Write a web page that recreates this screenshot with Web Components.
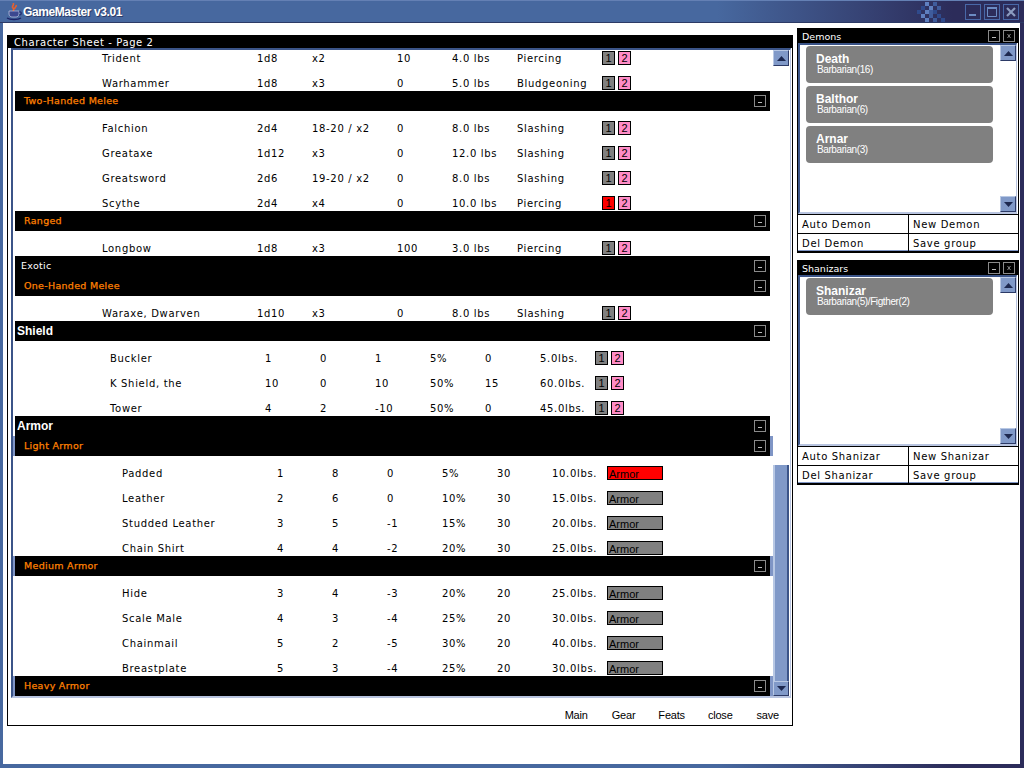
<!DOCTYPE html>
<html lang="en"><head><meta charset="utf-8"><title>GameMaster v3.01</title>
<style>html,body{margin:0;padding:0;background:#fff}</style></head>
<body>
<gm-window label="GameMaster v3.01">
  <gm-sheet label="Character Sheet - Page 2">
    <gm-row kind="w" cells="Trident|1d8|x2|10|4.0 lbs|Piercing"></gm-row>
    <gm-row kind="w" cells="Warhammer|1d8|x3|0|5.0 lbs|Bludgeoning"></gm-row>
    <gm-band level="sub">Two-Handed Melee</gm-band>
    <gm-row kind="w" cells="Falchion|2d4|18-20 / x2|0|8.0 lbs|Slashing"></gm-row>
    <gm-row kind="w" cells="Greataxe|1d12|x3|0|12.0 lbs|Slashing"></gm-row>
    <gm-row kind="w" cells="Greatsword|2d6|19-20 / x2|0|8.0 lbs|Slashing"></gm-row>
    <gm-row kind="w" active cells="Scythe|2d4|x4|0|10.0 lbs|Piercing"></gm-row>
    <gm-band level="sub">Ranged</gm-band>
    <gm-row kind="w" cells="Longbow|1d8|x3|100|3.0 lbs|Piercing"></gm-row>
    <gm-band level="mid">Exotic</gm-band>
    <gm-band level="sub">One-Handed Melee</gm-band>
    <gm-row kind="w" cells="Waraxe, Dwarven|1d10|x3|0|8.0 lbs|Slashing"></gm-row>
    <gm-band level="top">Shield</gm-band>
    <gm-row kind="s" cells="Buckler|1|0|1|5%|0|5.0lbs."></gm-row>
    <gm-row kind="s" cells="K Shield, the|10|0|10|50%|15|60.0lbs."></gm-row>
    <gm-row kind="s" cells="Tower|4|2|-10|50%|0|45.0lbs."></gm-row>
    <gm-band level="top">Armor</gm-band>
    <gm-band level="sub" strip>Light Armor</gm-band>
    <gm-row kind="a" active cells="Padded|1|8|0|5%|30|10.0lbs."></gm-row>
    <gm-row kind="a" cells="Leather|2|6|0|10%|30|15.0lbs."></gm-row>
    <gm-row kind="a" cells="Studded Leather|3|5|-1|15%|30|20.0lbs."></gm-row>
    <gm-row kind="a" cells="Chain Shirt|4|4|-2|20%|30|25.0lbs."></gm-row>
    <gm-band level="sub" strip>Medium Armor</gm-band>
    <gm-row kind="a" cells="Hide|3|4|-3|20%|20|25.0lbs."></gm-row>
    <gm-row kind="a" cells="Scale Male|4|3|-4|25%|20|30.0lbs."></gm-row>
    <gm-row kind="a" cells="Chainmail|5|2|-5|30%|20|40.0lbs."></gm-row>
    <gm-row kind="a" cells="Breastplate|5|3|-4|25%|20|30.0lbs."></gm-row>
    <gm-band level="sub" strip>Heavy Armor</gm-band>
  </gm-sheet>
  <gm-side>
    <gm-pane label="Demons" b1="Auto Demon" b2="New Demon" b3="Del Demon" b4="Save group">
      <gm-card name="Death" info="Barbarian(16)"></gm-card>
      <gm-card name="Balthor" info="Barbarian(6)"></gm-card>
      <gm-card name="Arnar" info="Barbarian(3)"></gm-card>
    </gm-pane>
    <gm-pane label="Shanizars" b1="Auto Shanizar" b2="New Shanizar" b3="Del Shanizar" b4="Save group">
      <gm-card name="Shanizar" info="Barbarian(5)/Figther(2)"></gm-card>
    </gm-pane>
  </gm-side>
</gm-window>
<script>
const FONT = '"DejaVu Sans", sans-serif';
const ARROW_UP = '<svg width="9" height="5" viewBox="0 0 9 5"><path d="M4.5 0 9 5H0z" fill="#1c2850"/></svg>';
const ARROW_DN = '<svg width="9" height="5" viewBox="0 0 9 5"><path d="M0 0h9L4.5 5z" fill="#1c2850"/></svg>';
const esc = s => String(s == null ? '' : s).replace(/&/g,'&amp;').replace(/</g,'&lt;').replace(/"/g,'&quot;');
class Base extends HTMLElement {
  render(html){ if(!this.shadowRoot) this.attachShadow({mode:'open'}); this.shadowRoot.innerHTML = html; }
}
function dots(){
  const cells = ['2,0','4,0','1,1','3,1','5,1','0,2','2,2','3,2','4,2','1,3','3,3','5,3','2,4','4,4','6,4'];
  return '<svg width="28" height="22" viewBox="0 0 28 22" style="display:block">' +
    cells.map((c,i)=>{const [x,y]=c.split(',').map(Number);return `<rect x="${x*4}" y="${y*4+1}" width="4" height="4" fill="${i%3==0?'#5f80c0':i%3==1?'#3f5c9c':'#2f4a8c'}"/>`}).join('') + '</svg>';
}
customElements.define('gm-window', class extends Base {
  connectedCallback(){
    this.render(`<style>
      :host{display:flex;flex-direction:column;width:1024px;height:768px;box-sizing:border-box;padding:0 4px 4px 3px;
        background:linear-gradient(90deg,#47689f 0,#47689f 70%,#2c2c5a 93%);
        font:10px ${FONT};letter-spacing:.68px;color:#000;overflow:hidden}
      .bar{flex:none;height:22px;margin:0 -4px 0 -3px;padding:0 5px 0 6px;display:flex;align-items:center;
        border-top:1px solid #6480b4;box-sizing:border-box}
      .bar>svg.logo{flex:none}
      .t{font:bold 12px "Liberation Sans",sans-serif;letter-spacing:-.4px;color:#fff;text-shadow:1px 1px 0 #2c3a66;flex:1}
      .dots{margin-right:17px}
      .wb{width:16px;height:16px;margin-left:3px;box-sizing:border-box;border:1px solid #4868a8;display:flex;align-items:center;justify-content:center}
      .line{flex:none;height:1px;background:#2c3a66;margin:0 -4px 0 -3px}
      .body{flex:1;min-height:0;background:#fff;display:flex;align-items:flex-start}
    </style>
    <div class="bar">
      <svg class="logo" width="17" height="18" viewBox="0 0 17 18">
        <path d="M7 0c2 2-2 3 0 5 1 1 1 2 0 3M10 2c1 2-2 2-1 4" fill="none" stroke="#e8602c" stroke-width="1.6"/>
        <path d="M3 8h10v3c0 2-2 3-3 3H6c-1 0-3-1-3-3z" fill="#3c4890" stroke="#d8dcf0" stroke-width=".6"/>
        <path d="M13 9c3-1 3 3 0 3" fill="none" stroke="#202c70" stroke-width="1.2"/>
        <path d="M1 15c3 2 11 2 14 0" fill="none" stroke="#1c2468" stroke-width="1.4"/>
      </svg>
      <span class="t">${esc(this.getAttribute('label'))}</span>
      <span class="dots">${dots()}</span>
      <span class="wb"><svg width="10" height="10" viewBox="0 0 10 10"><rect x="1" y="7" width="7" height="2" fill="#6c8cc4"/></svg></span>
      <span class="wb"><svg width="12" height="12" viewBox="0 0 12 12"><path d="M1.500 2v8.500h9V2z" fill="none" stroke="#6c8cc4"/><rect x="1" y="1" width="10" height="2" fill="#6c8cc4"/></svg></span>
      <span class="wb"><svg width="10" height="10" viewBox="0 0 10 10"><path d="M1 1l8 8M9 1l-8 8" stroke="#8c9cc0" stroke-width="2.200"/></svg></span>
    </div>
    <div class="line"></div>
    <div class="body"><slot></slot></div>`);
  }
});
customElements.define('gm-mini', class extends Base {
  connectedCallback(){
    this.render(`<style>
      :host{display:flex;flex:none;align-items:center;justify-content:center;width:12px;height:12px;box-sizing:border-box;border:1px solid #8a8a8a}
      svg{display:block}
    </style>${this.getAttribute('kind')==='x'
      ? '<svg width="6" height="6" viewBox="0 0 6 6"><path d="M1.500 1l3 4M4.500 1l-3 4" stroke="#999" stroke-width=".9"/></svg>'
      : '<svg width="6" height="6" viewBox="0 0 6 6"><rect x="1" y="4" width="4" height="1" fill="#bbb"/></svg>'}`);
  }
});
customElements.define('gm-sheet', class extends Base {
  connectedCallback(){
    this.render(`<style>
      :host{display:flex;flex-direction:column;flex:none;width:786px;height:691px;box-sizing:border-box;margin:12px 0 0 4px;
        border:1px solid #000;border-top:0}
      .title{flex:none;height:13px;line-height:16px;background:#000;color:#fff;padding-left:7px;margin:0 -1px;overflow:hidden;letter-spacing:.6px}
      .panel{flex:none;display:flex;height:650px;box-sizing:border-box;margin:0 1px 0 3px;
        border-style:solid;border-width:2px 1px 2px 2px;border-color:#3b5488 #b8c4e0 #b8c4e0 #3b5488}
      .content{flex:none;width:760px;overflow:hidden}
      .inner{margin-top:-9px}
      .bar{flex:none;width:16px;display:flex;flex-direction:column}
      .btn{flex:none;height:16px;box-sizing:border-box;display:flex;align-items:center;justify-content:center;
        background:#8099c8;border:1px solid;border-color:#b8c8e4 #2c3a66 #2c3a66 #b8c8e4}
      .dn{height:15px}
      .thumb{flex:none;height:216px;margin-top:auto;box-sizing:border-box;background:#8099c8;border-left:2px solid #b8c8e4;border-right:2px solid #3b5488}
      .foot{flex:1;display:flex;justify-content:flex-end;align-items:center;padding:6px 13px 0 0;
        font:11px "Liberation Sans",sans-serif;letter-spacing:-.2px;color:#000}
      .foot span{display:block}
    </style>
    <div class="title">${esc(this.getAttribute('label'))}</div>
    <div class="panel">
      <div class="content"><div class="inner"><slot></slot></div></div>
      <div class="bar">
        <div class="btn">${ARROW_UP}</div>
        <div class="thumb"></div>
        <div class="btn dn">${ARROW_DN}</div>
      </div>
    </div>
    <div class="foot">
      <span style="margin-right:24px">Main</span><span style="margin-right:23px">Gear</span><span style="margin-right:23px">Feats</span><span style="margin-right:24px">close</span><span>save</span>
    </div>`);
  }
});
customElements.define('gm-band', class extends Base {
  connectedCallback(){
    this.render(`<style>
      :host{display:flex;align-items:center;height:20px;background:#000;margin:0 3px 0 2px;box-sizing:content-box}
      :host([strip]){margin:0;border-left:2px solid #7f95c5;border-right:3px solid #7f95c5}
      .t{flex:1;min-width:0}
      :host([level=sub]) .t{padding:0 0 2px 9px;color:#ff8000;-webkit-text-stroke:.25px #ff8000;font-size:9.500px;letter-spacing:.3px}
      :host([level=mid]) .t{padding:0 0 2px 6px;color:#fff;font-size:9.500px;letter-spacing:.3px}
      :host([level=top]) .t{padding-left:2px;color:#fff;font:bold 12px "Liberation Sans",sans-serif;letter-spacing:0}
      gm-mini{margin-right:4px}
    </style><span class="t"><slot></slot></span><gm-mini></gm-mini>`);
  }
});
customElements.define('gm-pick', class extends Base {
  connectedCallback(){
    this.render(`<style>
      :host{display:block;box-sizing:border-box;border:1px solid #000;width:13px;height:14px;text-align:center;
        font:11px/13px "Liberation Sans",sans-serif;letter-spacing:0;color:#000;background:#808080}
      :host([tone=pink]){background:#ff8cc6}
      :host([tone=red]){background:#f00}
      :host([wide]){width:56px;text-align:left;padding-left:1px;line-height:14px}
    </style><slot></slot>`);
  }
});
const COLS = {w:'155px 55px 85px 55px 65px 85px auto', s:'155px 55px 55px 55px 55px 55px 55px auto', a:'155px 55px 55px 55px 55px 55px 55px auto'};
const PAD = {w:89, s:97, a:109};
customElements.define('gm-row', class extends Base {
  connectedCallback(){
    const k = this.getAttribute('kind');
    const cells = this.getAttribute('cells').split('|');
    const act = this.hasAttribute('active');
    const ctrl = k==='a'
      ? `<gm-pick wide ${act?'tone="red"':''}>Armor</gm-pick>`
      : `<div class="pk"><gm-pick ${act?'tone="red"':''}>1</gm-pick><gm-pick tone="pink">2</gm-pick></div>`;
    this.render(`<style>
      :host{display:grid;grid-template-columns:${COLS[k]};justify-content:start;height:25px;box-sizing:border-box;
        padding:10px 0 0 ${PAD[k]}px;line-height:16px;white-space:nowrap}
      .pk{display:flex;gap:3px}
    </style>${cells.map(c=>`<span>${esc(c)}</span>`).join('')}${ctrl}`);
  }
});
customElements.define('gm-side', class extends Base {
  connectedCallback(){
    this.render(`<style>
      :host{display:flex;flex-direction:column;gap:7px;flex:none;width:222px;margin:5px 0 0 4px}
    </style><slot></slot>`);
  }
});
customElements.define('gm-card', class extends Base {
  connectedCallback(){
    this.render(`<style>
      :host{display:block;width:187px;height:37px;box-sizing:border-box;background:#808080;border-radius:4px;color:#fff;
        padding:7px 0 0 10px;font-family:"Liberation Sans",sans-serif;letter-spacing:0}
      .n{font-weight:bold;font-size:12px;line-height:12px}
      .i{font-size:10px;line-height:9px;margin:0 0 0 1px;letter-spacing:-.4px}
    </style><div class="n">${esc(this.getAttribute('name'))}</div><div class="i">${esc(this.getAttribute('info'))}</div>`);
  }
});
customElements.define('gm-pane', class extends Base {
  connectedCallback(){
    const a = n => esc(this.getAttribute(n));
    this.render(`<style>
      :host{display:flex;flex-direction:column;height:225px;box-sizing:border-box;border:1px solid #000;border-width:0 1px}
      .head{flex:none;height:15px;background:#000;color:#fff;display:flex;align-items:center;margin:0 -1px;padding-left:5px;letter-spacing:0;font-size:9.500px;gap:3px}
      .head span{flex:1;padding-top:2px}
      .head gm-mini:last-child{margin-right:4px}
      .list{flex:none;height:171px;box-sizing:border-box;display:flex;justify-content:space-between;margin-right:1px;
        border-style:solid;border-width:2px 1px 2px 2px;border-color:#3b5488 #b8c4e0 #b8c4e0 #3b5488}
      .cards{display:flex;flex-direction:column;gap:3px;padding:1px 0 0 6px}
      .bar{flex:none;width:16px;display:flex;flex-direction:column;justify-content:space-between}
      .btn{height:16px;box-sizing:border-box;display:flex;align-items:center;justify-content:center;
        background:#8099c8;border:1px solid;border-color:#b8c8e4 #2c3a66 #2c3a66 #b8c8e4}
      .grid{flex:1;display:grid;grid-template-columns:111px 1fr;grid-template-rows:19px 17px;
        border-top:1px solid #000;border-bottom:2px solid #000;box-shadow:inset 0 -1px 0 #7f95c5;line-height:20px}
      .grid span{padding-left:4px;white-space:nowrap}
      .grid span:nth-child(odd){border-right:1px solid #000}
      .grid span:nth-child(-n+2){border-bottom:1px solid #000}
    </style>
    <div class="head"><span>${a('label')}</span><gm-mini></gm-mini><gm-mini kind="x"></gm-mini></div>
    <div class="list">
      <div class="cards"><slot></slot></div>
      <div class="bar"><div class="btn">${ARROW_UP}</div><div class="btn">${ARROW_DN}</div></div>
    </div>
    <div class="grid"><span>${a('b1')}</span><span>${a('b2')}</span><span>${a('b3')}</span><span>${a('b4')}</span></div>`);
  }
});
</script>
</body></html>
